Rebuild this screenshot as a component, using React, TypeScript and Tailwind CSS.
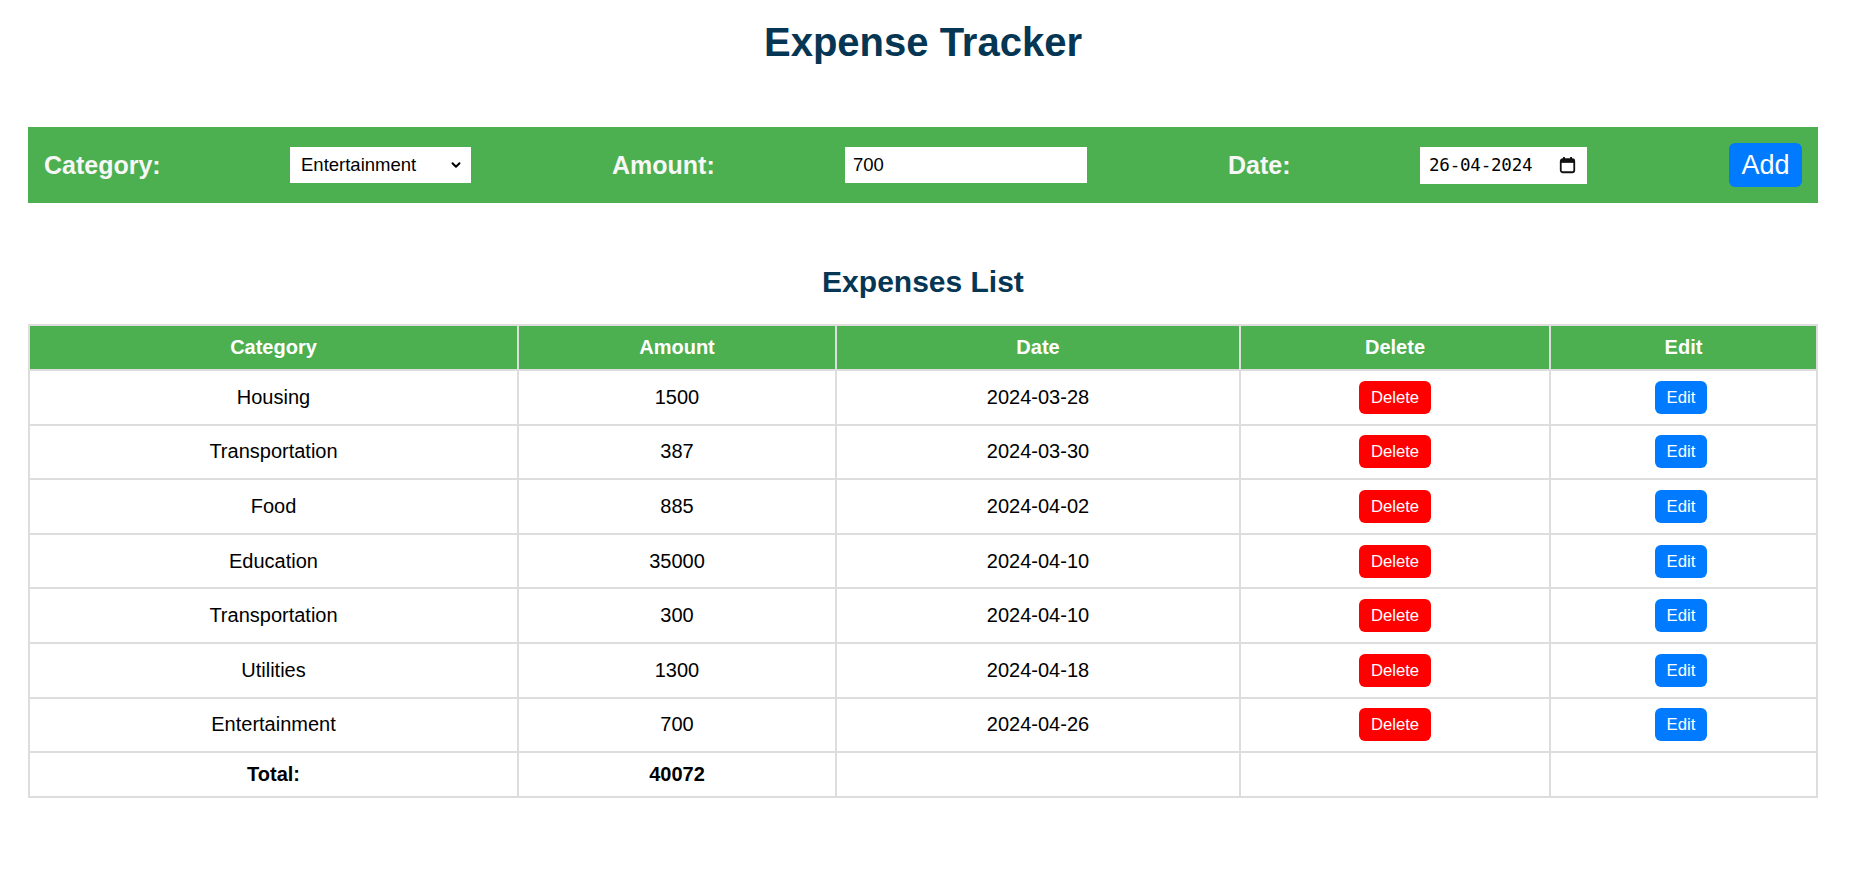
import React from "react";

interface Expense {
  category: string;
  amount: number;
  date: string;
}

var EXPENSES: Expense[] = [
  { category: "Housing", amount: 1500, date: "2024-03-28" },
  { category: "Transportation", amount: 387, date: "2024-03-30" },
  { category: "Food", amount: 885, date: "2024-04-02" },
  { category: "Education", amount: 35000, date: "2024-04-10" },
  { category: "Transportation", amount: 300, date: "2024-04-10" },
  { category: "Utilities", amount: 1300, date: "2024-04-18" },
  { category: "Entertainment", amount: 700, date: "2024-04-26" },
];

var CELL = "border-2 border-[#dddddd] text-center align-middle";

function Chevron() {
  return (
    <svg width="12" height="12" viewBox="0 0 12 12" className="shrink-0">
      <path d="M2.5 4.2 L6 7.8 L9.5 4.2" fill="none" stroke="#000" strokeWidth="2" strokeLinecap="round" strokeLinejoin="round" />
    </svg>
  );
}

function CalendarIcon() {
  return (
    <svg width="17" height="18" viewBox="0 0 17 18" className="shrink-0">
      <rect x="1.75" y="3.25" width="13.5" height="13" rx="2" fill="none" stroke="#111" strokeWidth="1.8" />
      <rect x="1.75" y="3.25" width="13.5" height="3.6" fill="#111" />
      <rect x="4" y="1" width="1.9" height="3.5" fill="#111" />
      <rect x="11.1" y="1" width="1.9" height="3.5" fill="#111" />
    </svg>
  );
}

export default function App() {
  var total = EXPENSES.reduce(function(sum, e) { return sum + e.amount; }, 0);

  return (
    <div className="w-[1846px] px-[28px] bg-white text-black font-['Liberation_Sans',Arial,sans-serif]">
      <h1 className="mt-[19px] text-center text-[40px] leading-[46px] font-bold text-[#053654]">Expense Tracker</h1>

      {/* Add form */}
      <div className="mt-[62px] h-[76px] bg-[#4caf50] px-[16px] flex items-center">
        <label className="w-[246px] text-[25px] leading-[28px] font-bold text-[#f7f7f7]">Category:</label>
        <div className="w-[181px] h-[36px] bg-white flex items-center justify-between pl-[11px] pr-[9px]">
          <span className="text-[18.5px] leading-[22px] text-black">Entertainment</span>
          <Chevron />
        </div>
        <label className="ml-[141px] w-[233px] text-[25px] leading-[28px] font-bold text-[#f7f7f7]">Amount:</label>
        <div className="w-[242px] h-[36px] bg-white flex items-center pl-[8px]">
          <span className="text-[18.5px] leading-[22px] text-black">700</span>
        </div>
        <label className="ml-[141px] w-[192px] text-[25px] leading-[28px] font-bold text-[#f7f7f7]">Date:</label>
        <div className="w-[167px] h-[37px] bg-white flex items-center pl-[9px] pr-[11px] justify-between">
          <span className="font-['DejaVu_Sans_Mono',monospace] text-[17.5px] leading-[22px] tracking-[-0.2px] text-black">26-04-2024</span>
          <CalendarIcon />
        </div>
        <button className="ml-auto h-[44px] w-[73px] rounded-[6px] bg-[#007bff] text-white text-[27px] leading-[31px] flex items-center justify-center">Add</button>
      </div>

      <h2 className="mt-[61px] text-center text-[30px] leading-[35px] font-bold text-[#053654]">Expenses List</h2>

      <table className="mt-[25px] w-[1788px] table-fixed border-collapse border-2 border-[#dddddd] text-[20px] leading-[23px]">
        <colgroup>
          <col className="w-[489px]" />
          <col className="w-[318px]" />
          <col className="w-[404px]" />
          <col className="w-[310px]" />
          <col className="w-[267px]" />
        </colgroup>
        <thead>
          <tr className="bg-[#4caf50] text-white">
            <th className={CELL + " py-[10px] font-bold"}>Category</th>
            <th className={CELL + " py-[10px] font-bold"}>Amount</th>
            <th className={CELL + " py-[10px] font-bold"}>Date</th>
            <th className={CELL + " py-[10px] font-bold"}>Delete</th>
            <th className={CELL + " py-[10px] font-bold"}>Edit</th>
          </tr>
        </thead>
        <tbody>
          {EXPENSES.map(function(e, i) {
            return (
              <tr key={i}>
                <td className={CELL + " py-[9.8px]"}>{e.category}</td>
                <td className={CELL + " py-[9.8px]"}>{e.amount}</td>
                <td className={CELL + " py-[9.8px]"}>{e.date}</td>
                <td className={CELL + " py-[9.8px]"}>
                  <button className="h-[33px] px-[12px] rounded-[6px] bg-[#ff0000] text-white text-[16.7px] leading-[19px]">Delete</button>
                </td>
                <td className={CELL + " py-[9.8px]"}>
                  <button className="h-[33px] px-[12px] mr-[5px] rounded-[6px] bg-[#007bff] text-white text-[16.7px] leading-[19px]">Edit</button>
                </td>
              </tr>
            );
          })}
          <tr>
            <td className={CELL + " py-[10px] font-bold"}>Total:</td>
            <td className={CELL + " py-[10px] font-bold"}>{total}</td>
            <td className={CELL + " py-[10px]"}></td>
            <td className={CELL + " py-[10px]"}></td>
            <td className={CELL + " py-[10px]"}></td>
          </tr>
        </tbody>
      </table>
    </div>
  );
}
